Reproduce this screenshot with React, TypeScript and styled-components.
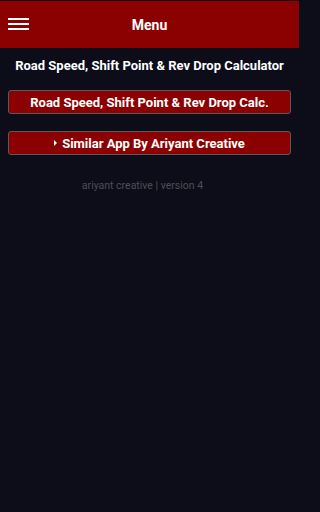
import React from 'react';
import styled, { createGlobalStyle } from 'styled-components';

const GlobalStyle = createGlobalStyle`
    html, body {
        margin: 0;
        padding: 0;
        background: #0d0c19;
    }
    body {
        font-family: Roboto, "Noto Sans", Arial, sans-serif;
    }
`;

const Page = styled.div`
    width: 299px;
    min-height: 512px;
    background: #0d0c19;
    border-top: 1px solid #1a0000;
    box-sizing: border-box;
`;

const Header = styled.div`
    height: 47px;
    background: #8b0000;
    display: grid;
    grid-template-columns: 47px 1fr 47px;
    align-items: center;
`;

const MenuButton = styled.div`
    display: flex;
    flex-direction: column;
    gap: 3px;
    padding-left: 8px;
    margin-top: -1px;

    span {
        display: block;
        width: 21px;
        height: 2px;
        background: #ffffff;
    }
`;

const HeaderTitle = styled.div`
    text-align: center;
    color: #ffffff;
    font-weight: bold;
    font-size: 14px;
`;

const Content = styled.div`
    padding: 9px 8px 0;
    display: flex;
    flex-direction: column;
    align-items: stretch;
`;

const PageTitle = styled.div`
    color: #ffffff;
    font-weight: bold;
    font-size: 13px;
    text-align: center;
    line-height: 18px;
`;

const RedButton = styled.div<{ $top: number }>`
    margin-top: ${p => p.$top}px;
    height: 22px;
    background: #8b0000;
    border: 1px solid #5a5a5a;
    border-radius: 3px;
    color: #ffffff;
    font-weight: bold;
    font-size: 13px;
    display: flex;
    align-items: center;
    justify-content: center;
    gap: 5px;
`;

const Arrow = styled.span`
    width: 0;
    height: 0;
    border-top: 3px solid transparent;
    border-bottom: 3px solid transparent;
    border-left: 3px solid #ffffff;
`;

const Footer = styled.div`
    margin-top: 24px;
    padding-right: 14px;
    text-align: center;
    color: #4e4e56;
    font-size: 10.5px;
`;

const App = () => {
    return (
        <>
            <GlobalStyle />
            <Page>
                <Header>
                    <MenuButton>
                        <span />
                        <span />
                        <span />
                    </MenuButton>
                    <HeaderTitle>Menu</HeaderTitle>
                    <div />
                </Header>
                <Content>
                    <PageTitle>Road Speed, Shift Point &amp; Rev Drop Calculator</PageTitle>
                    <RedButton $top={15}>Road Speed, Shift Point &amp; Rev Drop Calc.</RedButton>
                    <RedButton $top={17}>
                        <Arrow />
                        Similar App By Ariyant Creative
                    </RedButton>
                    <Footer>ariyant creative | version 4</Footer>
                </Content>
            </Page>
        </>
    );
};

export default App;
